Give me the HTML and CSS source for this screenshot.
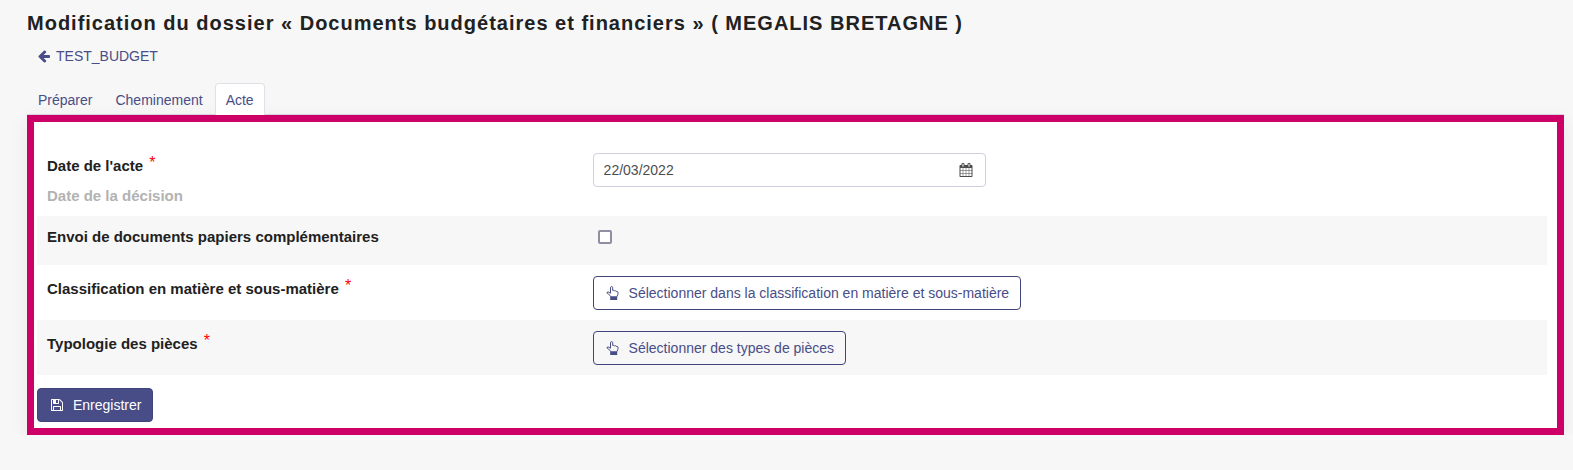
FILE: index.html
```
<!DOCTYPE html>
<html lang="fr">
<head>
    <meta charset="UTF-8">
    <meta name="viewport" content="width=device-width, initial-scale=1.0">
    <title>Modification du dossier</title>
    <link rel="stylesheet" href="styles.css">
</head>
<body>
    <main class="page">
        <h1>Modification du dossier « Documents budgétaires et financiers » ( MEGALIS BRETAGNE )</h1>
        <a class="back-link" href="#">
            <svg class="icon" viewBox="0 0 1792 1792" aria-hidden="true"><path d="M1664 896v128q0 53-32.5 90.5t-84.5 37.5h-704l293 294q38 36 38 90t-38 90l-75 76q-37 37-90 37-52 0-91-37l-651-652q-37-37-37-90 0-52 37-91l651-650q38-38 91-38 52 0 90 38l75 74q38 38 38 91t-38 91l-293 293h704q52 0 84.5 37.5t32.5 90.5z"/></svg>
            TEST_BUDGET
        </a>
        <nav class="tabs">
            <a class="tab" href="#">Préparer</a>
            <a class="tab" href="#">Cheminement</a>
            <a class="tab active" href="#">Acte</a>
        </nav>
        <form class="box">
            <table class="fields">
                <tr>
                    <th>
                        <label for="date_acte">Date de l'acte</label> <span class="required">*</span>
                        <p class="hint">Date de la décision</p>
                    </th>
                    <td>
                        <div class="date-field">
                            <input type="text" id="date_acte" name="date_acte" value="22/03/2022">
                            <button type="button" class="date-btn" aria-label="Calendrier">
                                <svg class="icon" viewBox="0 0 1664 1792"><path d="M128 1664h288v-288h-288v288zm352 0h320v-288h-320v288zm-352-352h288v-320h-288v320zm352 0h320v-320h-320v320zm-352-384h288v-288h-288v288zm736 736h320v-288h-320v288zm-384-736h320v-288h-320v288zm768 736h288v-288h-288v288zm-384-352h320v-320h-320v320zm-352-864v-288q0-13-9.5-22.5t-22.5-9.5h-64q-13 0-22.5 9.5t-9.5 22.5v288q0 13 9.5 22.5t22.5 9.5h64q13 0 22.5-9.5t9.5-22.5zm736 864h288v-320h-288v320zm-384-384h320v-288h-320v288zm384 0h288v-288h-288v288zm32-480v-288q0-13-9.5-22.5t-22.5-9.5h-64q-13 0-22.5 9.5t-9.5 22.5v288q0 13 9.5 22.5t22.5 9.5h64q13 0 22.5-9.5t9.5-22.5zm384-64v1280q0 52-38 90t-90 38h-1408q-52 0-90-38t-38-90v-1280q0-52 38-90t90-38h128v-96q0-66 47-113t113-47h64q66 0 113 47t47 113v96h384v-96q0-66 47-113t113-47h64q66 0 113 47t47 113v96h128q52 0 90 38t38 90z"/></svg>
                            </button>
                        </div>
                    </td>
                </tr>
                <tr>
                    <th><label for="papier">Envoi de documents papiers complémentaires</label></th>
                    <td><input type="checkbox" class="checkbox" id="papier" name="papier"></td>
                </tr>
                <tr>
                    <th>Classification en matière et sous-matière <span class="required">*</span></th>
                    <td>
                        <button type="button" class="btn btn-outline">
                            <svg class="icon" viewBox="0 0 14 14" aria-hidden="true"><path class="line" d="M4.500 7.200V1.700a1.100 1.100 0 0 1 2.200 0V4.500q1.100-.4 1.700.3q1.100-.4 1.700.5q2-.3 2 1.500q0 1.800-1.300 4H4.800Q4.500 9.500 2.800 8.400Q.6 7.200 1 6.300Q1.800 5.200 4.500 7.200z"/><path d="M4.200 10.800h7v3.200h-7z"/></svg>
                            Sélectionner dans la classification en matière et sous-matière
                        </button>
                    </td>
                </tr>
                <tr>
                    <th>Typologie des pièces <span class="required">*</span></th>
                    <td>
                        <button type="button" class="btn btn-outline">
                            <svg class="icon" viewBox="0 0 14 14" aria-hidden="true"><path class="line" d="M4.500 7.200V1.700a1.100 1.100 0 0 1 2.200 0V4.500q1.100-.4 1.700.3q1.100-.4 1.700.5q2-.3 2 1.500q0 1.800-1.300 4H4.800Q4.500 9.500 2.800 8.400Q.6 7.200 1 6.300Q1.800 5.200 4.500 7.200z"/><path d="M4.200 10.800h7v3.200h-7z"/></svg>
                            Sélectionner des types de pièces
                        </button>
                    </td>
                </tr>
            </table>
            <button type="submit" class="btn btn-primary">
                <svg class="icon" viewBox="0 0 1792 1792" aria-hidden="true"><path d="M512 1536h768v-384h-768v384zm896 0h128v-896q0-14-10-38.5t-20-34.5l-281-281q-10-10-34-20t-39-10v416q0 40-28 68t-68 28h-576q-40 0-68-28t-28-68v-416h-128v1280h128v-416q0-40 28-68t68-28h832q40 0 68 28t28 68v416zm-384-928v-320q0-13-9.5-22.5t-22.5-9.5h-192q-13 0-22.5 9.5t-9.5 22.5v320q0 13 9.5 22.5t22.5 9.5h192q13 0 22.5-9.5t9.5-22.5zm640 32v928q0 40-28 68t-68 28h-1344q-40 0-68-28t-28-68v-1344q0-40 28-68t68-28h928q40 0 88 20t76 48l280 280q28 28 48 76t20 88z"/></svg>
                Enregistrer
            </button>
        </form>
    </main>
</body>
</html>
```
FILE: styles.css
```
* {
    margin: 0;
    padding: 0;
    box-sizing: border-box;
}

body {
    font-family: "Liberation Sans", Arial, sans-serif;
    font-size: 14px;
    line-height: 20px;
    background-color: #f7f7f7;
    color: #212121;
}

.page {
    padding: 8px 9px 0 27px;
}

h1 {
    font-size: 20px;
    line-height: 30px;
    letter-spacing: 1px;
    margin-bottom: 8px;
}

a {
    color: #484d87;
    text-decoration: none;
}

.icon {
    width: 14px;
    height: 14px;
    fill: currentColor;
    flex: none;
}

.icon .line {
    fill: none;
    stroke: currentColor;
}

.back-link {
    display: inline-flex;
    align-items: center;
    gap: 5px;
    margin-left: 10px;
}

.tabs {
    display: flex;
    margin-top: 15px;
    border-bottom: 1px solid #d9d9de;
}

.tab {
    padding: 6px 10px 4px;
    margin-right: 1px;
    border: 1px solid transparent;
    border-bottom: none;
    border-radius: 4px 4px 0 0;
}

.tab.active {
    background-color: #fff;
    border-color: #dee2e6;
    margin-bottom: -1px;
}

.box {
    background-color: #fff;
    border: 7px solid #cc0066;
    padding: 20px 10px 6px 3px;
    box-shadow: 0 5px 20px rgba(0, 0, 0, 0.06);
}

.fields {
    width: 100%;
    border-collapse: collapse;
    margin-bottom: 13px;
}

.fields tr {
    height: 49px;
}

.fields tr:nth-child(even) {
    background-color: #f7f7f7;
}

.fields th,
.fields td {
    padding: 11px 10px 10px;
    text-align: left;
    vertical-align: top;
}

.fields th {
    width: 36%;
    font-size: 15px;
}

.fields td {
    padding-left: 12px;
}

.required {
    color: #f00;
    font-size: 16px;
    font-weight: normal;
    vertical-align: 3px;
    margin-left: 2px;
}

.hint {
    color: #b2b2b2;
    margin-top: 10px;
}

.date-field {
    display: flex;
    width: 25vw;
    height: 34px;
    border: 1px solid #cfd0dd;
    border-radius: 4px;
    background-color: #fff;
}

.date-field input {
    flex: 1;
    min-width: 0;
    padding: 0 10px;
    border: none;
    outline: none;
    background: none;
    font: inherit;
    color: #4d4d4d;
}

.date-btn {
    display: flex;
    align-items: center;
    padding: 0 12px;
    border: none;
    background: none;
    color: #4d4d4d;
    cursor: pointer;
}

.checkbox {
    display: block;
    appearance: none;
    width: 14px;
    height: 14px;
    margin: 3px 5px;
    border: 2px solid #8f8ea3;
    border-radius: 2px;
    background-color: #fff;
}

.btn {
    display: flex;
    align-items: center;
    gap: 9px;
    padding: 6px 11px 6px 12px;
    border: 1px solid #3f447a;
    border-radius: 4px;
    font: inherit;
    line-height: 20px;
    cursor: pointer;
}

.btn-outline {
    background-color: transparent;
    color: #484d87;
}

.btn-primary {
    background-color: #484d87;
    color: #fff;
}
```
